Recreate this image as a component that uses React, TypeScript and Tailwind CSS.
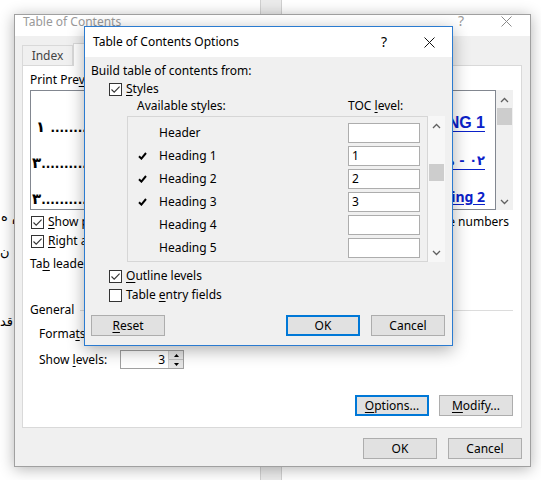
import React from "react";

const U = ({ children }: { children: React.ReactNode }) => (
  <span className="underline underline-offset-[2px] decoration-[1px]">{children}</span>
);

function Box({ checked }: { checked?: boolean }) {
  return (
    <span className="w-[13px] h-[13px] border border-[#333333] bg-white flex items-center justify-center shrink-0">
      {checked && (
        <svg width="11" height="11" viewBox="0 0 11 11">
          <path d="M1.5 5.5 L4.2 8.2 L9.6 2.6" fill="none" stroke="#333333" strokeWidth="1.1" />
        </svg>
      )}
    </span>
  );
}

function Btn({ children, focus, className = "" }: { children: React.ReactNode; focus?: boolean; className?: string }) {
  return (
    <div
      className={`h-[21px] w-[74px] flex items-center justify-center bg-[#e1e1e1] text-black ${
        focus ? "border-2 border-[#0078d7]" : "border border-[#adadad]"
      } ${className}`}
    >
      {children}
    </div>
  );
}

function ChevUp() {
  return (
    <svg width="9" height="6" viewBox="0 0 9 6">
      <path d="M1 5 L4.5 1.5 L8 5" fill="none" stroke="#606060" strokeWidth="1.3" />
    </svg>
  );
}
function ChevDown() {
  return (
    <svg width="9" height="6" viewBox="0 0 9 6">
      <path d="M1 1 L4.5 4.5 L8 1" fill="none" stroke="#606060" strokeWidth="1.3" />
    </svg>
  );
}

function CloseX({ color }: { color: string }) {
  return (
    <svg width="11" height="11" viewBox="0 0 11 11">
      <path d="M0.5 0.5 L10.5 10.5 M10.5 0.5 L0.5 10.5" stroke={color} strokeWidth="1" />
    </svg>
  );
}

function BoldCheck() {
  return (
    <svg width="9" height="8" viewBox="0 0 9 8">
      <path d="M1 4.2 L3.4 6.6 L8 1" fill="none" stroke="#000" strokeWidth="2" />
    </svg>
  );
}

const styles = [
  { name: "Header", level: "", checked: false },
  { name: "Heading 1", level: "1", checked: true },
  { name: "Heading 2", level: "2", checked: true },
  { name: "Heading 3", level: "3", checked: true },
  { name: "Heading 4", level: "", checked: false },
  { name: "Heading 5", level: "", checked: false },
];

function BackDialog() {
  return (
    <div className="absolute left-[14px] top-[14px] w-[517px] h-[453px] bg-[#f0f0f0] border border-[#a0a0a0] shadow-[0_2px_14px_rgba(0,0,0,0.3)] flex flex-col">
      {/* title bar */}
      <div className="h-[21px] bg-white flex items-start text-[#999999] shrink-0">
        <span className="pl-[8px] mt-[-1px] text-[12px] leading-[16px]">Table of Contents</span>
        <span className="ml-auto mt-[-2px] text-[14px] leading-[16px] w-[10px] text-center">?</span>
        <span className="ml-[35px] mr-[18px] mt-[1px]">
          <CloseX color="#8a8a8a" />
        </span>
      </div>
      {/* body */}
      <div className="flex flex-col pl-[7px] pr-[8px] flex-1">
        {/* tabs */}
        <div className="flex items-end mt-[7px] h-[22px] relative">
          <div className="w-[51px] h-[20px] border border-b-0 border-[#d9d9d9] bg-[#f0f0f0] flex items-center justify-center text-[#444444]">
            Index
          </div>
          <div className="w-[130px] h-[23px] border border-b-0 border-[#d9d9d9] bg-white mb-[-1px] flex items-center justify-center">
            Table of Contents
          </div>
        </div>
        {/* panel */}
        <div className="h-[363px] bg-white border border-[#d9d9d9] flex flex-col pl-[7px] pr-[8px]">
          <div className="flex mt-[6px]">
            {/* left preview */}
            <div className="w-[218px] flex flex-col">
              <div className="leading-[16px]">
                Print Pre<U>v</U>iew
              </div>
              <div className="mt-[2px] h-[120px] border border-[#828790] bg-white overflow-hidden font-['DejaVu_Sans',sans-serif] font-bold text-[15px] flex flex-col pl-[5px] pt-[27px] gap-[16px]">
                <div className="leading-[19px] whitespace-nowrap">
                  ١ <span className="text-[12px]">...................................</span>
                </div>
                <div className="leading-[19px] whitespace-nowrap ml-[-4px]">
                  ٣<span className="text-[12px]">..............................................</span>
                </div>
                <div className="leading-[19px] whitespace-nowrap ml-[-4px]">
                  ٣<span className="text-[12px]">..............................................</span>
                </div>
              </div>
            </div>
            {/* right preview */}
            <div className="ml-[37px] flex-1 flex flex-col">
              <div className="leading-[16px]">
                <U>W</U>eb Preview
              </div>
              <div className="mt-[2px] h-[120px] flex">
                <div className="flex-1 border border-[#828790] bg-white overflow-hidden flex flex-col items-end pr-[10px] pt-[22px] text-[#0b21c9] font-bold">
                  <div className="text-[16px] leading-[20px] underline underline-offset-[3px] whitespace-nowrap font-['Liberation_Sans',sans-serif]">HEADING 1</div>
                  <div className="mt-[19px] text-[13px] leading-[18px] underline underline-offset-[4px] whitespace-nowrap font-['DejaVu_Sans',sans-serif] [direction:ltr] [unicode-bidi:bidi-override]">
                    مقدمه - ٠٢
                  </div>
                  <div className="mt-[18px] text-[14px] leading-[18px] underline underline-offset-[2px] whitespace-nowrap font-['Noto_Sans',sans-serif]">
                    Heading 2
                  </div>
                </div>
                <div className="w-[17px] bg-[#f0f0f0] flex flex-col items-center">
                  <div className="h-[17px] flex items-center justify-center mt-[1px]">
                    <ChevUp />
                  </div>
                  <div className="w-[15px] h-[17px] bg-[#cdcdcd]" />
                  <div className="mt-auto h-[17px] flex items-center justify-center">
                    <ChevDown />
                  </div>
                </div>
              </div>
            </div>
          </div>
          {/* checkboxes */}
          <div className="flex mt-[4px]">
            <div className="w-[218px] flex flex-col">
              <div className="flex items-center gap-[4px] h-[16px] pl-[1px]">
                <Box checked />
                <span>
                  <U>S</U>how page numbers
                </span>
              </div>
              <div className="flex items-center gap-[4px] h-[16px] mt-[3px] pl-[1px]">
                <Box checked />
                <span>
                  <U>R</U>ight align page numbers
                </span>
              </div>
              <div className="flex items-center h-[21px] mt-[4px]">
                <span>
                  Ta<U>b</U> leader:
                </span>
              </div>
            </div>
            <div className="ml-[37px] flex-1 flex flex-col min-w-0">
              <div className="flex items-center gap-[4px] h-[16px] justify-end pr-[4px] whitespace-nowrap">
                <Box checked />
                <span className="shrink-0">
                  Use <U>h</U>yperlinks instead of page numbers
                </span>
              </div>
            </div>
          </div>
          {/* General */}
          <div className="flex items-center mt-[28px] h-[16px]">
            <span>General</span>
            <div className="flex-1 h-px bg-[#dcdcdc] ml-[6px]" />
          </div>
          <div className="flex items-center h-[16px] mt-[8px] pl-[9px]">
            <span>
              Forma<U>t</U>s:
            </span>
          </div>
          <div className="flex items-center h-[19px] mt-[8px] pl-[9px]">
            <span className="w-[81px]">
              Show <U>l</U>evels:
            </span>
            <div className="w-[64px] h-[19px] border border-[#a0a0a0] bg-white flex items-center">
              <span className="flex-1 text-right pr-[3px]">3</span>
              <div className="w-[15px] h-[17px] flex flex-col border-l border-[#cfcfcf]">
                <div className="flex-1 bg-[#e5e5e5] border-b border-[#bdbdbd] flex items-center justify-center">
                  <svg width="5" height="3" viewBox="0 0 5 3">
                    <path d="M0 3 L2.5 0 L5 3 Z" fill="#000" />
                  </svg>
                </div>
                <div className="flex-1 bg-[#e5e5e5] flex items-center justify-center">
                  <svg width="5" height="3" viewBox="0 0 5 3">
                    <path d="M0 0 L2.5 3 L5 0 Z" fill="#000" />
                  </svg>
                </div>
              </div>
            </div>
          </div>
          <div className="flex justify-end gap-[10px] mt-[26px]">
            <Btn focus>
              <span>
                <U>O</U>ptions...
              </span>
            </Btn>
            <Btn>
              <span>
                <U>M</U>odify...
              </span>
            </Btn>
          </div>
        </div>
        {/* bottom buttons */}
        <div className="flex justify-end gap-[11px] mt-[10px]">
          <Btn>OK</Btn>
          <Btn>Cancel</Btn>
        </div>
      </div>
    </div>
  );
}

function FrontDialog() {
  return (
    <div className="absolute z-20 left-[84px] top-[26px] w-[369px] h-[320px] bg-[#f0f0f0] border border-[#2b7bd0] shadow-[0_4px_16px_rgba(0,0,0,0.32)] flex flex-col">
      <div className="h-[30px] bg-white flex items-center shrink-0">
        <span className="pl-[8px] text-[12px]">Table of Contents Options</span>
        <span className="ml-auto text-[14px] leading-[16px] w-[10px] text-center">?</span>
        <span className="ml-[35px] mr-[17px]">
          <CloseX color="#111111" />
        </span>
      </div>
      <div className="flex flex-col pl-[6px] pr-[7px]">
        <div className="mt-[6px] leading-[16px]">Build table of contents from:</div>
        <div className="flex items-center gap-[4px] h-[16px] mt-[2px] pl-[18px]">
          <Box checked />
          <span>
            <U>S</U>tyles
          </span>
        </div>
        <div className="flex h-[16px] mt-[1px] leading-[16px]">
          <span className="pl-[46px] w-[257px]">Available styles:</span>
          <span>
            TOC <U>l</U>evel:
          </span>
        </div>
        <div className="flex mt-[2px] ml-[36px] h-[146px]">
          <div className="w-[301px] border border-[#d6d6d6] flex flex-col pt-[6px] pr-[7px]">
            {styles.map((s) => (
              <div key={s.name} className="flex items-center h-[20px] mb-[3px]">
                <span className="w-[31px] pl-[10px] flex items-center">{s.checked && <BoldCheck />}</span>
                <span className="flex-1">{s.name}</span>
                <span className="w-[72px] h-[20px] border border-[#adadad] bg-white pl-[3px] leading-[18px]">{s.level}</span>
              </div>
            ))}
          </div>
          <div className="w-[17px] bg-[#f7f7f7] flex flex-col items-center">
            <div className="h-[17px] flex items-center justify-center mt-[1px]">
              <ChevUp />
            </div>
            <div className="w-[15px] h-[17px] bg-[#cdcdcd] mt-[30px]" />
            <div className="mt-auto h-[17px] flex items-center justify-center mb-[1px]">
              <ChevDown />
            </div>
          </div>
        </div>
        <div className="flex items-center gap-[4px] h-[16px] mt-[6px] pl-[18px]">
          <Box checked />
          <span>
            <U>O</U>utline levels
          </span>
        </div>
        <div className="flex items-center gap-[4px] h-[16px] mt-[3px] pl-[18px]">
          <Box />
          <span>
            Table <U>e</U>ntry fields
          </span>
        </div>
        <div className="flex mt-[12px]">
          <Btn>
            <span>
              <U>R</U>eset
            </span>
          </Btn>
          <Btn focus className="ml-auto">
            OK
          </Btn>
          <Btn className="ml-[11px]">Cancel</Btn>
        </div>
      </div>
    </div>
  );
}

export default function App() {
  return (
    <div className="relative w-[541px] h-[480px] overflow-hidden bg-white font-['Noto_Sans',sans-serif] text-[12px] leading-[16px] text-black">
      <div className="absolute left-[260px] top-0 w-[22px] h-full bg-[#ebebeb] border-l border-r border-[#d0d0d0]" />
      <div className="absolute left-[1px] top-[209px] font-['DejaVu_Sans',sans-serif] text-[13px] whitespace-nowrap">م ه</div>
      <div className="absolute left-[0px] top-[244px] font-['DejaVu_Sans',sans-serif] text-[13px] whitespace-nowrap">ب ن</div>
      <div className="absolute left-[0px] top-[314px] font-['DejaVu_Sans',sans-serif] text-[13px] whitespace-nowrap">قد</div>
      <BackDialog />
      <FrontDialog />
    </div>
  );
}
